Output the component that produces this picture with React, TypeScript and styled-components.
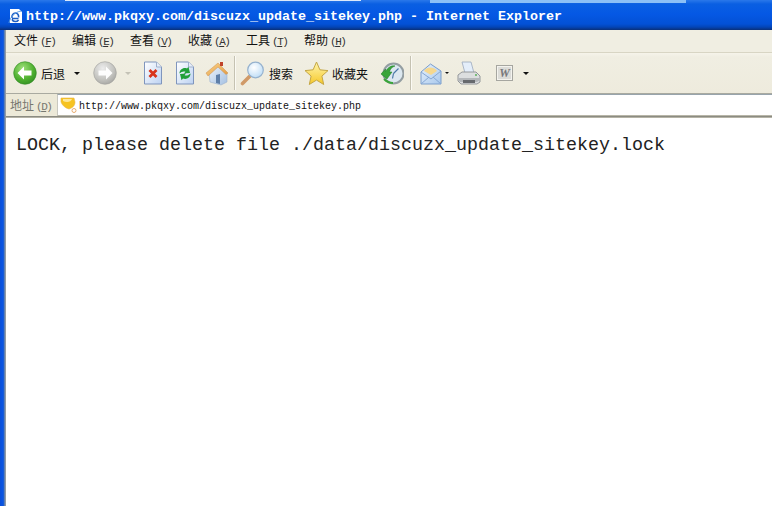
import { FC, ReactNode } from 'react';
import styled, { createGlobalStyle } from 'styled-components';

const MONO = '"Liberation Mono", "DejaVu Sans Mono", monospace';
const CJK = '"Noto Sans CJK SC", "Liberation Sans", sans-serif';

const GlobalStyle = createGlobalStyle`
    * {
        box-sizing: border-box;
    }
    html, body {
        margin: 0;
        padding: 0;
        height: 100%;
        overflow: hidden;
        background: #fff;
    }
    #root {
        height: 100%;
    }
`;

const MENU = [
    { label: '文件', key: 'F' },
    { label: '编辑', key: 'E' },
    { label: '查看', key: 'V' },
    { label: '收藏', key: 'A' },
    { label: '工具', key: 'T' },
    { label: '帮助', key: 'H' },
];

const Window = styled.div`
    display: flex;
    flex-direction: column;
    height: 100%;
`;

const TitleBar = styled.header`
    display: flex;
    flex-direction: column;
    flex: 0 0 30px;
    background: linear-gradient(180deg, #2a78ea 0, #0a5fe2 4px, #0558e4 14px, #0351d6 24px, #0345b8 27px, #0a3079 30px);
`;

const Glare = styled.div`
    display: flex;
    align-items: flex-start;
    height: 3px;
`;

const GlareSegment = styled.span<{ $width: number; $tone?: 'white' | 'sky' }>`
    flex: 0 0 ${({ $width }) => $width}px;
    height: ${({ $tone }) => ($tone === 'sky' ? 3 : 1)}px;
    background: ${({ $tone }) => ($tone === 'white' ? '#dbe9fb' : $tone === 'sky' ? '#8cc0f6' : 'transparent')};
`;

const TitleRow = styled.div`
    display: flex;
    align-items: center;
    gap: 3px;
    height: 27px;
    padding-left: 8px;
`;

const TitleText = styled.span`
    font: bold 13.33px ${MONO};
    color: #fff;
    white-space: pre;
`;

const Frame = styled.div`
    display: flex;
    flex: 1;
    min-height: 0;
`;

const Border = styled.div`
    flex: 0 0 6px;
    background: linear-gradient(90deg, #0a4fd8 0, #0a55e6 3px, #2a62c0 4px, #8b9bb0 5px, #9a9a98 6px);
`;

const Main = styled.div`
    display: flex;
    flex-direction: column;
    flex: 1;
    min-width: 0;
`;

const MenuBar = styled.nav`
    display: flex;
    align-items: center;
    flex: 0 0 23px;
    padding: 0 0 3px 8px;
    background: #f0eee2;
    border-bottom: 1px solid #d8d5c4;
`;

const MenuItem = styled.span`
    flex: 0 0 58px;
    font: 12px ${CJK};
    color: #111;
    white-space: nowrap;
`;

const Accel = styled.span`
    font: 11px ${MONO};
    color: #333;
    margin-left: 2px;
    letter-spacing: -1.5px;

    u {
        text-underline-offset: 1px;
    }
`;

const ToolBar = styled.div`
    display: flex;
    align-items: center;
    flex: 0 0 41px;
    padding-left: 7px;
    background: linear-gradient(180deg, #f6f4ea 0, #f0eee2 4px, #eeebdd 100%);
    border-bottom: 1px solid #a9aaa0;
`;

const Icon = styled.svg<{ $ml?: number }>`
    flex: none;
    margin-left: ${({ $ml }) => $ml ?? 0}px;
`;

const ToolLabel = styled.span<{ $ml: number }>`
    flex: none;
    margin-left: ${({ $ml }) => $ml}px;
    font: 12px ${CJK};
    color: #111;
`;

const Caret = styled.span<{ $ml: number; $size?: number; $faint?: boolean }>`
    flex: none;
    margin-left: ${({ $ml }) => $ml}px;
    width: 0;
    height: 0;
    border-style: solid;
    border-width: ${({ $size = 3 }) => `${$size}px ${$size}px 0`};
    border-color: ${({ $faint }) => ($faint ? '#c4c2b6' : '#111')} transparent transparent;
`;

const Separator = styled.span<{ $ml: number }>`
    flex: none;
    align-self: center;
    height: 34px;
    width: 2px;
    margin-left: ${({ $ml }) => $ml}px;
    background: #c5c2b2;
    border-right: 1px solid #fbfaf4;
`;

const AddressBar = styled.div`
    display: flex;
    align-items: stretch;
    flex: 0 0 23px;
    background: #ece9d8;
    border-bottom: 1px solid #8b8b82;
`;

const AddressLabel = styled.span`
    flex: 0 0 51px;
    align-self: center;
    padding: 0 0 2px 4px;
    font: 12px ${CJK};
    color: #77776f;
    white-space: nowrap;
`;

const AddressAccel = styled(Accel)`
    color: #77776f;
`;

const AddressField = styled.div`
    display: flex;
    align-items: center;
    flex: 1;
    gap: 1px;
    padding-left: 2px;
    background: #fff;
    border-top: 1px solid #98a4ac;
    border-left: 1px solid #c8c8c0;
    border-bottom: 1px solid #b8b6a8;
`;

const AddressText = styled.span`
    font: 10px ${MONO};
    color: #111;
    margin-top: 2px;
`;

const Page = styled.main`
    flex: 1;
    padding: 17px 10px 0;
    background: #fff;
    border-top: 1px solid #b5b3a6;
    font: 18.33px ${MONO};
    color: #222;
    white-space: pre;
`;

const MenuEntry: FC<{ label: string; letter: string }> = ({ label, letter }) => (
    <MenuItem>
        {label}
        <Accel>(<u>{letter}</u>)</Accel>
    </MenuItem>
);

const Svg: FC<{ w: number; h: number; ml?: number; children: ReactNode }> = ({ w, h, ml, children }) => (
    <Icon $ml={ml} width={w} height={h} viewBox={`0 0 ${w} ${h}`}>{children}</Icon>
);

const IeIcon = () => (
    <Svg w={15} h={15}>
        <path d="M2 0h9l3 3v11H2z" fill="#fff" />
        <path d="M4 9.500h6.500M3.900 9c-.4-3 1.400-5 3.500-5s3.500 2 3.200 4.400M10.600 11c-1.600 2-5.400 2.300-6.600-.6" fill="none" stroke="#1f5fc4" strokeWidth="1.600" />
        <path d="M1 14c1-6 6-11 12-12" fill="none" stroke="#5a9ce6" strokeWidth="1" />
    </Svg>
);

const RoundArrow: FC<{ id: string; back?: boolean; light: string; mid: string; dark: string; ml?: number }> = ({ id, back, light, mid, dark, ml }) => (
    <Svg w={24} h={24} ml={ml}>
        <defs>
            <radialGradient id={id} cx="0.4" cy="0.3" r="0.8">
                <stop offset="0" stopColor={light} />
                <stop offset="0.6" stopColor={mid} />
                <stop offset="1" stopColor={dark} />
            </radialGradient>
        </defs>
        <circle cx="12" cy="12" r="11.300" fill={`url(#${id})`} stroke={dark} strokeWidth=".6" />
        <path
            d={back ? 'M4.500 12l6.500-6.500v4h7.500v5H11v4z' : 'M19.500 12L13 5.500v4H5.500v5H13v4z'}
            fill="#fff"
            opacity={back ? 1 : 0.95}
        />
    </Svg>
);

const PageShape: FC<{ id: string; children: ReactNode; ml: number }> = ({ id, children, ml }) => (
    <Svg w={20} h={24} ml={ml}>
        <defs>
            <linearGradient id={id} x1="0" y1="0" x2="1" y2="1">
                <stop offset="0" stopColor="#fff" />
                <stop offset="1" stopColor="#bcd2f2" />
            </linearGradient>
        </defs>
        <path d="M1.500 1h12l5 5v17h-17z" fill={`url(#${id})`} stroke="#7f95bd" />
        <path d="M13.500 1v5h5" fill="#e8eef8" stroke="#9fb0cc" />
        {children}
    </Svg>
);

const HomeIcon: FC<{ ml: number }> = ({ ml }) => (
    <Svg w={24} h={25} ml={ml}>
        <defs>
            <linearGradient id="wall" x1="0" y1="0" x2="1" y2="1">
                <stop offset="0" stopColor="#f0f5fb" />
                <stop offset="1" stopColor="#a4c0e2" />
            </linearGradient>
            <linearGradient id="roof" x1="0" y1="0" x2="1" y2="1">
                <stop offset="0" stopColor="#fbd48c" />
                <stop offset="1" stopColor="#e29a40" />
            </linearGradient>
        </defs>
        <path d="M4 11l10-7 8 8v9l-6 3-11-3z" fill="url(#wall)" stroke="#9db2cc" strokeWidth=".6" />
        <path d="M1 12L13 2l10 10-2 1.500L13 6 3 15z" fill="url(#roof)" stroke="#cc9050" strokeWidth=".5" />
        <rect x="15" y="1" width="3" height="4" fill="#c0442a" />
        <path d="M11 14l4-1v10l-4-1z" fill="#5f7fa8" />
    </Svg>
);

const SearchIcon: FC<{ ml: number }> = ({ ml }) => (
    <Svg w={25} h={25} ml={ml}>
        <defs>
            <radialGradient id="lens" cx="0.4" cy="0.35" r="0.7">
                <stop offset="0" stopColor="#fff" />
                <stop offset="1" stopColor="#bcdcf6" />
            </radialGradient>
        </defs>
        <path d="M2.500 22.500l7-7" stroke="#d09a68" strokeWidth="3.600" strokeLinecap="round" />
        <circle cx="15.500" cy="9" r="7.800" fill="url(#lens)" stroke="#96b2ce" strokeWidth="1.200" />
    </Svg>
);

const StarIcon: FC<{ ml: number }> = ({ ml }) => (
    <Svg w={25} h={25} ml={ml}>
        <defs>
            <linearGradient id="starFill" x1="0" y1="0" x2="0" y2="1">
                <stop offset="0" stopColor="#fff6b0" />
                <stop offset="1" stopColor="#f6c828" />
            </linearGradient>
        </defs>
        <path d="M12.500 1l3.400 7.800 8.100.8-6.100 5.500 1.800 8.400-7.200-4.400-7.200 4.400 1.800-8.400L1 9.600l8.100-.8z" fill="url(#starFill)" stroke="#c4a644" strokeLinejoin="round" />
    </Svg>
);

const HistoryIcon: FC<{ ml: number }> = ({ ml }) => (
    <Svg w={24} h={23} ml={ml}>
        <circle cx="13.500" cy="11.500" r="10" fill="#dce8f0" stroke="#949ea2" strokeWidth="2" />
        <path d="M13.500 11.500l5-5M13.500 11.500l-1 5" stroke="#4a78a8" strokeWidth="1.200" />
        <path d="M1 12l4.500-5v2.500C8 5 12 3 15 4c-3 1-5 3-5.500 6H12l-5 7z" fill="#3aa53a" stroke="#1f7a24" strokeWidth=".5" />
        <path d="M4 17c3 3 6 4 9 4" stroke="#3aa53a" strokeWidth="2" fill="none" />
    </Svg>
);

const MailIcon: FC<{ ml: number }> = ({ ml }) => (
    <Svg w={22} h={25} ml={ml}>
        <defs>
            <linearGradient id="envelope" x1="0" y1="0" x2="1" y2="1">
                <stop offset="0" stopColor="#e8f2fc" />
                <stop offset="1" stopColor="#a8c8ec" />
            </linearGradient>
        </defs>
        <path d="M1 11L10.500 3 21 10v13H1z" fill="url(#envelope)" stroke="#7a9ecc" />
        <path d="M4 10c2-4 9-5 13 0l-6 4z" fill="#f6d88e" />
        <path d="M1 11l10 7 10-8M1 23l8-7M21 23l-8-7" fill="none" stroke="#86a8d4" />
    </Svg>
);

const PrinterIcon: FC<{ ml: number }> = ({ ml }) => (
    <Svg w={24} h={25} ml={ml}>
        <path d="M5 1h9l3 11H8z" fill="#e4eefa" stroke="#9aa8bc" strokeWidth=".8" />
        <path d="M1 14l4-3h14l4 4v6l-3 2H4l-3-3z" fill="#dcdedf" stroke="#94979a" />
        <path d="M1 17h22v2l-3 2H3l-2-2z" fill="#b4b7ba" />
        <rect x="6" y="19" width="12" height="3" fill="#66696d" />
        <path d="M18 14h2" stroke="#5bb05b" strokeWidth="1.500" />
    </Svg>
);

const WordIcon: FC<{ ml: number }> = ({ ml }) => (
    <Svg w={17} h={16} ml={ml}>
        <rect x=".5" y=".5" width="16" height="15" fill="#f4f3ee" stroke="#a6a6a0" />
        <rect x="2" y="2" width="13" height="12" fill="#dcdcd8" />
        <text x="8.500" y="12" textAnchor="middle" fontFamily='"Liberation Serif", serif' fontStyle="italic" fontWeight="bold" fontSize="12" fill="#77777a">W</text>
    </Svg>
);

const ShieldIcon = () => (
    <Svg w={18} h={17}>
        <path d="M1 1h13l1 4c0 4-3 6-6 7C5 11 2 8 1 5z" fill="#f6c320" stroke="#eab64a" strokeWidth=".6" />
        <path d="M3 2h9c-1 3-5 4-9 2z" fill="#fde79a" />
        <circle cx="14" cy="13.500" r="2" fill="#fff" stroke="#e8ad70" />
    </Svg>
);

const App: FC = () => (
    <Window>
        <GlobalStyle />
        <TitleBar>
            <Glare>
                <GlareSegment $width={65} />
                <GlareSegment $width={296} $tone="white" />
                <GlareSegment $width={69} />
                <GlareSegment $width={256} $tone="sky" />
            </Glare>
            <TitleRow>
                <IeIcon />
                <TitleText>http://www.pkqxy.com/discuzx_update_sitekey.php - Internet Explorer</TitleText>
            </TitleRow>
        </TitleBar>
        <Frame>
            <Border />
            <Main>
                <MenuBar>
                    {MENU.map((item) => <MenuEntry key={item.key} label={item.label} letter={item.key} />)}
                </MenuBar>
                <ToolBar>
                    <RoundArrow id="back" back light="#9fe07a" mid="#4fb02f" dark="#2f8a22" />
                    <ToolLabel $ml={4}>后退</ToolLabel>
                    <Caret $ml={9} />
                    <RoundArrow id="forward" light="#ececec" mid="#c4c4c0" dark="#a0a09c" ml={13} />
                    <Caret $ml={8} $faint />
                    <PageShape id="stopPage" ml={12}>
                        <path d="M6.500 9l7 7M13.500 9l-7 7" stroke="#d8341c" strokeWidth="2.800" />
                    </PageShape>
                    <PageShape id="refreshPage" ml={12}>
                        <path d="M4.500 12.500c0-4 4-6.500 7.500-5l1.500-1.800 1.500 6.300-6 .5 1.400-1.800c-2.400-.8-4 .4-5.900 1.800zM15.500 12.500c0 4-4 6.500-7.500 5l-1.500 1.800L5 13l6-.5-1.400 1.800c2.400.8 4-.4 5.900-1.800z" fill="#22a03a" />
                    </PageShape>
                    <HomeIcon ml={10} />
                    <Separator $ml={5} />
                    <SearchIcon ml={4} />
                    <ToolLabel $ml={4}>搜索</ToolLabel>
                    <StarIcon ml={11} />
                    <ToolLabel $ml={3}>收藏夹</ToolLabel>
                    <HistoryIcon ml={12} />
                    <Separator $ml={6} />
                    <MailIcon ml={8} />
                    <Caret $ml={3} $size={2.5} />
                    <PrinterIcon ml={8} />
                    <WordIcon ml={15} />
                    <Caret $ml={10} />
                </ToolBar>
                <AddressBar>
                    <AddressLabel>
                        地址
                        <AddressAccel>(<u>D</u>)</AddressAccel>
                    </AddressLabel>
                    <AddressField>
                        <ShieldIcon />
                        <AddressText>http://www.pkqxy.com/discuzx_update_sitekey.php</AddressText>
                    </AddressField>
                </AddressBar>
                <Page>LOCK, please delete file ./data/discuzx_update_sitekey.lock</Page>
            </Main>
        </Frame>
    </Window>
);

export default App;
